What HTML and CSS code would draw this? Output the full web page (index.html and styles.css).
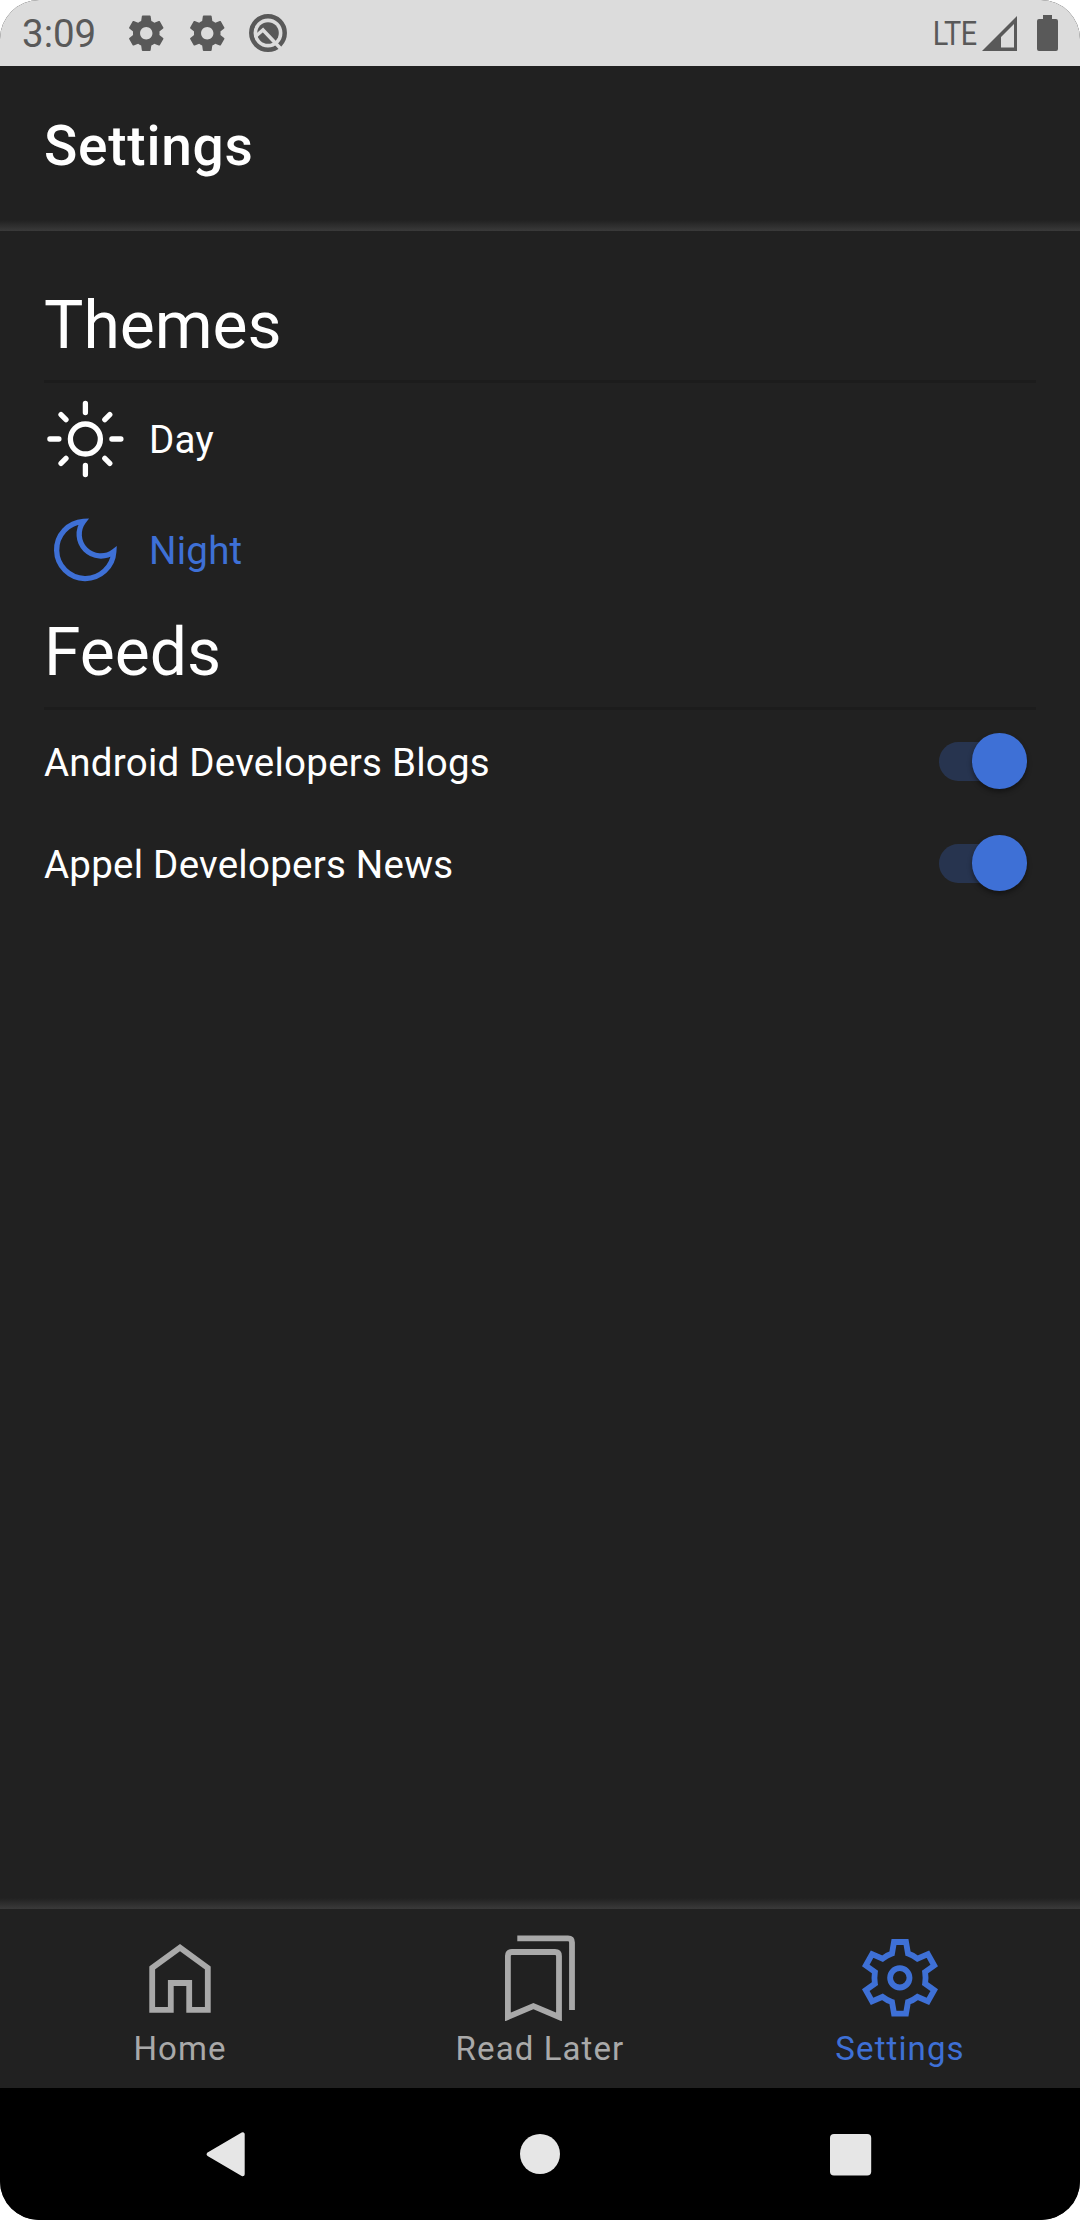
FILE: index.html
```html
<!DOCTYPE html>
<html lang="en">
<head>
<meta charset="utf-8">
<title>Settings</title>
<link rel="stylesheet" href="styles.css">
</head>
<body>
<div class="screen">
  <div class="status-bar">
    <span class="time">3:09</span>
    <div class="notifications">
      <svg class="gear" viewBox="0 0 24 24"><path d="M19.43 12.98c.04-.32.07-.64.07-.98s-.03-.66-.07-.98l2.11-1.65c.19-.15.24-.42.12-.64l-2-3.46c-.12-.22-.39-.3-.61-.22l-2.49 1c-.52-.4-1.08-.73-1.69-.98l-.38-2.65C14.46 2.18 14.25 2 14 2h-4c-.25 0-.46.18-.49.42l-.38 2.65c-.61.25-1.17.59-1.69.98l-2.49-1c-.23-.09-.49 0-.61.22l-2 3.46c-.13.22-.07.49.12.64l2.11 1.65c-.04.32-.07.65-.07.98s.03.66.07.98l-2.11 1.65c-.19.15-.24.42-.12.64l2 3.46c.12.22.39.3.61.22l2.49-1c.52.4 1.08.73 1.69.98l.38 2.65c.03.24.24.42.49.42h4c.25 0 .46-.18.49-.42l.38-2.65c.61-.25 1.17-.59 1.69-.98l2.49 1c.23.09.49 0 .61-.22l2-3.46c.12-.22.07-.49-.12-.64l-2.11-1.65zM12 15.5c-1.93 0-3.5-1.57-3.5-3.5s1.57-3.5 3.5-3.5 3.5 1.57 3.5 3.5-1.57 3.5-3.5 3.5z"/></svg>
      <svg class="gear" viewBox="0 0 24 24"><path d="M19.43 12.98c.04-.32.07-.64.07-.98s-.03-.66-.07-.98l2.11-1.65c.19-.15.24-.42.12-.64l-2-3.46c-.12-.22-.39-.3-.61-.22l-2.49 1c-.52-.4-1.08-.73-1.69-.98l-.38-2.65C14.46 2.18 14.25 2 14 2h-4c-.25 0-.46.18-.49.42l-.38 2.65c-.61.25-1.17.59-1.69.98l-2.49-1c-.23-.09-.49 0-.61.22l-2 3.46c-.13.22-.07.49.12.64l2.11 1.65c-.04.32-.07.65-.07.98s.03.66.07.98l-2.11 1.65c-.19.15-.24.42-.12.64l2 3.46c.12.22.39.3.61.22l2.49-1c.52.4 1.08.73 1.69.98l.38 2.65c.03.24.24.42.49.42h4c.25 0 .46-.18.49-.42l.38-2.65c.61-.25 1.17-.59 1.69-.98l2.49 1c.23.09.49 0 .61-.22l2-3.46c.12-.22.07-.49-.12-.64l-2.11-1.65zM12 15.5c-1.93 0-3.5-1.57-3.5-3.5s1.57-3.5 3.5-3.5 3.5 1.57 3.5 3.5-1.57 3.5-3.5 3.5z"/></svg>
      <svg class="debug" viewBox="0 0 40 40">
        <circle class="ring" cx="20" cy="20" r="16.7"/>
        <circle cx="20" cy="20" r="10.8"/>
        <path class="cut" d="M8 23 15 17 34 37"/>
      </svg>
    </div>
    <span class="network">LTE</span>
    <svg class="signal" viewBox="0 0 35 35"><path fill-rule="evenodd" d="M35 0V35H0ZM32 8 19 21V31.5H32Z"/></svg>
    <svg class="battery" viewBox="0 0 21 36"><path d="M6 0h9v4h4a2 2 0 0 1 2 2v28a2 2 0 0 1-2 2H2a2 2 0 0 1-2-2V6a2 2 0 0 1 2-2h4z"/></svg>
  </div>

  <header class="header"><h1>Settings</h1></header>

  <main class="content">
    <section>
      <h2>Themes</h2>
      <div class="theme day">
        <svg viewBox="0 0 82 82"><circle cx="41.4" cy="41" r="15"/><path d="M41.4 5.5v9M41.4 67.500v9M5.9 41h9M67.900 41h9M17 16.600l5 5M60.800 60.400l5 5M17 65.400l5-5M60.800 21.600l5-5"/></svg>
        <span>Day</span>
      </div>
      <div class="theme night">
        <svg viewBox="0 0 82 82"><path d="M39.500 12.400A21.600 21.600 0 0 0 69.800 42.600 28.600 28.600 0 1 1 39.500 12.400Z"/></svg>
        <span>Night</span>
      </div>
    </section>
    <section class="feeds">
      <h2>Feeds</h2>
      <div class="feed"><span>Android Developers Blogs</span><i class="switch"></i></div>
      <div class="feed"><span>Appel Developers News</span><i class="switch"></i></div>
    </section>
  </main>

  <nav class="tabs">
    <div class="tab">
      <svg viewBox="0 0 90 90"><path d="M17.200 36.900 45 16.600 72.800 36.900V78.800H54.200V52H35.800V78.800H17.200Z"/></svg>
      <span>Home</span>
    </div>
    <div class="tab">
      <svg viewBox="0 0 90 90"><path d="M12.900 86V25q0-4 4-4H60q4 0 4 4V86L38.400 75.200ZM22.300 7.400H73q4 0 4 4V79"/></svg>
      <span>Read Later</span>
    </div>
    <div class="tab active">
      <svg viewBox="0 0 90 90"><circle cx="44.800" cy="46.800" r="9.700"/><path d="M39 11H51L53 22.600Q58 24.200 62.500 27.700L72.900 23.200 79.200 34.500 70.100 41Q71 46.800 70.100 52.600L79.200 59.100 72.900 70.400 62.500 65.900Q58 69.400 53 71L51 82.600H39L37 71Q32 69.400 27.500 65.900L17.100 70.400 10.800 59.100 19.900 52.600Q19 46.800 19.900 41L10.800 34.500 17.100 23.200 27.500 27.700Q32 24.200 37 22.600Z"/></svg>
      <span>Settings</span>
    </div>
  </nav>

  <div class="system-nav">
    <svg viewBox="0 0 48 48"><path class="back" d="M40.700 4.300V44.300L6.600 24.300Z"/></svg>
    <svg viewBox="0 0 48 48"><circle cx="24" cy="24" r="20"/></svg>
    <svg viewBox="0 0 48 48"><rect x="0" y="4" width="41.200" height="41.400" rx="4"/></svg>
  </div>
</div>
</body>
</html>
```
FILE: styles.css
```css
* { box-sizing: border-box; }
body { margin: 0; background: #fff; font-family: Roboto, sans-serif; color: #fff; }
svg { display: block; flex: none; }
h1, h2 { margin: 0; }

.screen {
  width: 1080px;
  height: 2220px;
  display: flex;
  flex-direction: column;
  background: #212121;
  border-radius: 39px;
  overflow: hidden;
}

.status-bar {
  height: 66px;
  padding: 0 22px;
  display: flex;
  align-items: center;
  background: #dcdcdc;
  color: #595959;
  fill: #595959;
}
.time { width: 103px; font-size: 38.5px; line-height: 66px; padding-top: 2px; }
.notifications { display: flex; align-items: center; gap: 18.5px; flex: 1; }
.gear { width: 42.5px; height: 42.5px; }
.debug { width: 40px; height: 40px; margin-left: 1px; }
.ring { fill: none; stroke: #595959; stroke-width: 4.5; }
.cut { fill: none; stroke: #dcdcdc; stroke-width: 3.5; }
.network {
  font-size: 34px;
  line-height: 66px;
  letter-spacing: -0.5px;
  transform: scaleX(0.85);
  transform-origin: right;
}
.signal { width: 35px; height: 35px; margin-left: 5px; }
.battery { width: 21px; height: 36px; margin-left: 20px; }

.header {
  height: 165px;
  padding: 48px 44px 0;
  background: linear-gradient(#212121, #3a3a3a) bottom / 100% 11px no-repeat;
}
.header h1 { font-size: 55px; font-weight: 500; line-height: 64px; letter-spacing: 0.75px; }

.content { flex: 1; padding: 55px 44px 0; }
.content h2 {
  height: 97px;
  padding-top: 1px;
  font-size: 66px;
  font-weight: 400;
  line-height: 77px;
  border-bottom: 3px solid #1c1c1c;
}
.feeds { margin-top: 8px; }
.theme {
  height: 111px;
  display: flex;
  align-items: center;
  gap: 23px;
  font-size: 38.5px;
  letter-spacing: 0.24px;
  fill: none;
}
.theme svg { width: 82px; height: 82px; stroke: currentColor; stroke-width: 5.3; }
.theme span { padding-top: 2px; }
.day svg { stroke-linecap: round; }
.night { color: #3e70d6; }
.feed {
  height: 102px;
  padding-right: 9px;
  display: flex;
  align-items: center;
  justify-content: space-between;
  font-size: 38.5px;
  letter-spacing: 0.24px;
}
.feed span { padding-top: 3px; }
.switch {
  width: 88px;
  height: 39px;
  border-radius: 20px;
  background: #27344f;
  display: flex;
  align-items: center;
  justify-content: flex-end;
}
.switch::after {
  content: "";
  width: 55.5px;
  height: 55.5px;
  flex: none;
  border-radius: 50%;
  background: #3e70d6;
  box-shadow: 0 3px 5px rgba(0, 0, 0, 0.4);
}
/* the track ends under the thumb */
.switch { background: linear-gradient(#27344f, #27344f) left / 60px 100% no-repeat; }

.tabs {
  height: 190px;
  padding-top: 33px;
  display: grid;
  grid-template-columns: repeat(3, 1fr);
  background: linear-gradient(#212121, #3a3a3a) top / 100% 11px no-repeat;
  color: #a9a9a9;
}
.tab {
  display: flex;
  flex-direction: column;
  align-items: center;
  gap: 8px;
  font-size: 33px;
  line-height: 40px;
  letter-spacing: 1.1px;
}
.tab svg { width: 90px; height: 90px; fill: none; stroke: currentColor; stroke-width: 5.8; }
.active { color: #3e70d6; }

.system-nav {
  height: 132px;
  padding: 0 202px;
  display: flex;
  align-items: center;
  justify-content: space-between;
  background: #000;
  fill: #e6e6e6;
}
.system-nav svg { width: 48px; height: 48px; }
.back { stroke: #e6e6e6; stroke-width: 4; stroke-linejoin: round; }
```
